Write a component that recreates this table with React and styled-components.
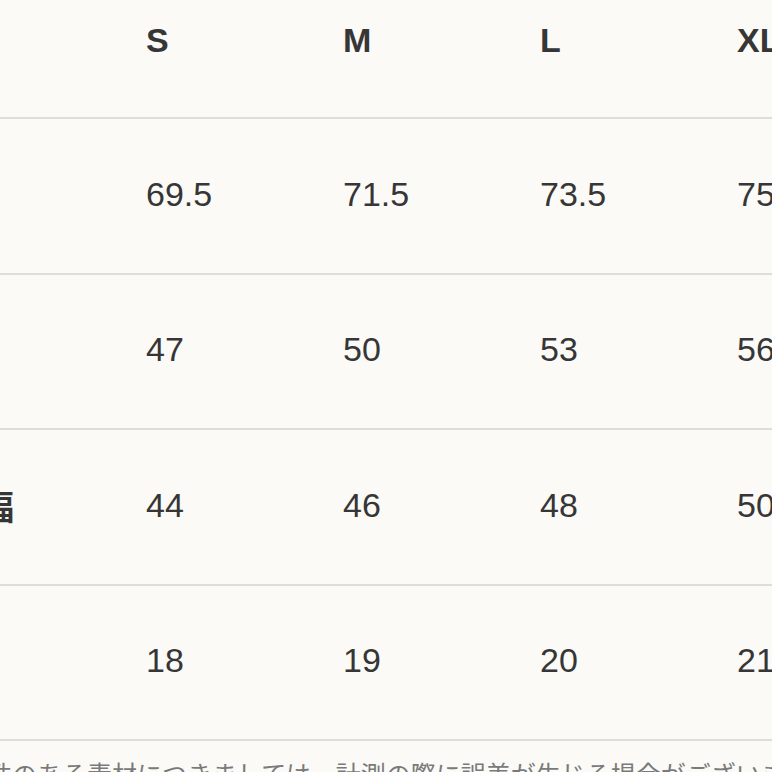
import React from "react";
import styled, { createGlobalStyle } from "styled-components";

const GlobalStyle = createGlobalStyle`
  html, body {
    margin: 0;
    padding: 0;
    background: #fbfaf6;
    overflow: hidden;
  }
  body {
    font-family: "Liberation Sans", "Noto Sans CJK JP", sans-serif;
    color: #363636;
  }
`;

const Page = styled.div`
  width: 772px;
  height: 772px;
  overflow: hidden;
  background: #fbfaf6;
`;

const Scroller = styled.div`
  margin-left: -88px;
  margin-top: -36.5px;
  width: 1300px;
`;

const Table = styled.div`
  display: grid;
  grid-template-columns: 234px repeat(5, 197px);
`;

const Cell = styled.div`
  box-sizing: border-box;
  height: 155.5px;
  padding-bottom: ${(p) => (p.$head ? "0" : "3px")};
  border-bottom: 2px solid #dfddd8;
  display: flex;
  align-items: center;
  font-size: 34px;
  font-weight: ${(p) => (p.$bold ? 700 : 400)};
  color: #363636;
  white-space: nowrap;
  font-family: "Liberation Sans", "Noto Sans CJK JP", sans-serif;
`;

const Note = styled.p`
  margin: 0;
  padding-top: 10px;
  font-family: "Noto Sans CJK JP", sans-serif;
  font-size: 25px;
  line-height: 1.8;
  color: #7a7a7a;
  white-space: nowrap;
`;

const sizes = ["S", "M", "L", "XL", "XXL"];
const rows = [
  { label: "着丈", values: ["69.5", "71.5", "73.5", "75.5", "77.5"] },
  { label: "身幅", values: ["47", "50", "53", "56", "59"] },
  { label: "肩の幅", values: ["44", "46", "48", "50", "52"] },
  { label: "袖丈", values: ["18", "19", "20", "21", "22"] },
];

export default function App() {
  return (
    <Page>
      <GlobalStyle />
      <Scroller>
        <Table>
          <Cell $bold $head />
          {sizes.map((s) => (
            <Cell key={s} $bold $head>
              {s}
            </Cell>
          ))}
          {rows.map((r) => (
            <React.Fragment key={r.label}>
              <Cell $bold>{r.label}</Cell>
              {r.values.map((v, i) => (
                <Cell key={i}>{v}</Cell>
              ))}
            </React.Fragment>
          ))}
        </Table>
        <Note>
          ※伸縮性のある素材につきましては、計測の際に誤差が生じる場合がございます。予めご了承ください。
        </Note>
      </Scroller>
    </Page>
  );
}
